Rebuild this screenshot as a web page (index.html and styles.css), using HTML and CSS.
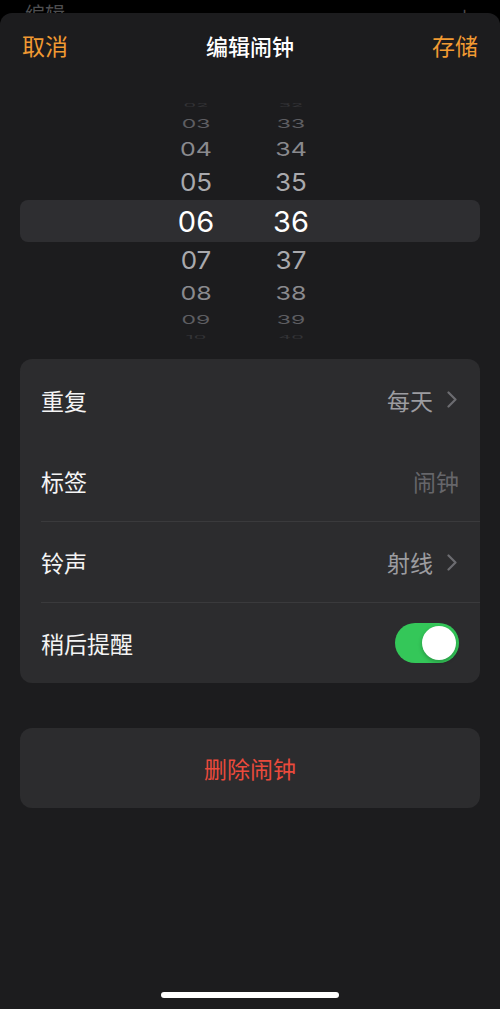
FILE: index.html
```html
<!DOCTYPE html>
<html lang="zh-CN">
  <head>
    <meta charset="utf-8">
    <title>编辑闹钟</title>
    <link rel="stylesheet" href="styles.css">
  </head>
  <body>

  <div class="backdrop">
    <span class="backdrop-edit">编辑</span>
    <span class="backdrop-plus">+</span>
  </div>

  <div class="sheet">

    <div class="nav">
      <span class="nav-btn">取消</span>
      <span class="nav-title">编辑闹钟</span>
      <span class="nav-btn">存储</span>
    </div>

    <div class="picker">
      <div class="wheel-row r-edge"><span>02</span><span>32</span></div>
      <div class="wheel-row r3"><span>03</span><span>33</span></div>
      <div class="wheel-row r2"><span>04</span><span>34</span></div>
      <div class="wheel-row r1"><span>05</span><span>35</span></div>
      <div class="wheel-row selected"><span>06</span><span>36</span></div>
      <div class="wheel-row r1"><span>07</span><span>37</span></div>
      <div class="wheel-row r2"><span>08</span><span>38</span></div>
      <div class="wheel-row r3 lower"><span>09</span><span>39</span></div>
      <div class="wheel-row r-edge"><span>10</span><span>40</span></div>
    </div>

    <div class="group">
      <div class="cell">
        <span class="cell-label">重复</span>
        <span class="cell-value">每天
          <svg class="chevron" width="10" height="17" viewBox="0 0 10 17"><path d="M1.5 1.5 L8.5 8.5 L1.5 15.5" fill="none" stroke="#6c6c70" stroke-width="2.2" stroke-linecap="round" stroke-linejoin="round"/></svg>
        </span>
      </div>
      <div class="cell">
        <span class="cell-label">标签</span>
        <span class="cell-value placeholder">闹钟</span>
      </div>
      <div class="cell divided">
        <span class="cell-label">铃声</span>
        <span class="cell-value">射线
          <svg class="chevron" width="10" height="17" viewBox="0 0 10 17"><path d="M1.5 1.5 L8.5 8.5 L1.5 15.5" fill="none" stroke="#6c6c70" stroke-width="2.2" stroke-linecap="round" stroke-linejoin="round"/></svg>
        </span>
      </div>
      <div class="cell divided">
        <span class="cell-label">稍后提醒</span>
        <span class="switch on"><span class="knob"></span></span>
      </div>
    </div>

    <div class="group delete">
      删除闹钟
    </div>

    <div class="home-bar"></div>
  </div>

  </body>
</html>
```

FILE: styles.css
```css
html {
  height: 100%;
}
body {
  margin: 0;
  padding: 0;
  background: #000000;
  color: #f2f2f2;
  font-family: "Noto Sans CJK SC", "Noto Sans", sans-serif;
  width: 500px;
}

.backdrop {
  height: 13px;
  overflow: hidden;
  display: flex;
  justify-content: space-between;
  padding: 4px 30px 0 25px;
  box-sizing: border-box;
  color: #4e4e50;
  font-size: 20px;
  line-height: 20px;
}

.sheet {
  background: #1c1c1e;
  border-radius: 12px 12px 0 0;
  min-height: 996px;
  display: flex;
  flex-direction: column;
}

.nav {
  height: 64px;
  display: flex;
  align-items: center;
  justify-content: space-between;
  padding: 0 22px;
}
.nav-btn {
  color: #f19a32;
  font-size: 23px;
}
.nav-title {
  color: #ffffff;
  font-size: 22px;
  font-weight: 500;
}

.picker {
  margin-top: 23px;
  font-family: "Inter", "Noto Sans", sans-serif;
}

.wheel-row {
  display: grid;
  grid-template-columns: 60px 60px;
  column-gap: 35px;
  padding-left: 166px;
  align-items: center;
  text-align: center;
  color: #a2a2a6;
}
.wheel-row span {
  display: block;
}

.wheel-row.selected {
  height: 42px;
  margin: 0 20px;
  padding-left: 146px;
  background: #2e2e31;
  border-radius: 8px;
  color: #ffffff;
  font-size: 29px;
}
.wheel-row.r1 {
  height: 36px;
  font-size: 26px;
  color: #a9a9ad;
}
.wheel-row.r1 span {
  transform: scaleY(0.94);
}
.wheel-row.r2 {
  height: 30px;
  font-size: 25px;
  color: #8a8a8e;
}
.wheel-row.r2 span {
  transform: scaleY(0.76);
}
.wheel-row.r3 {
  height: 24px;
  font-size: 23px;
  color: #5e5e62;
}
.wheel-row.r3 span {
  transform: scaleY(0.52);
}
.wheel-row.r3.lower span {
  transform: translateY(-2px) scaleY(0.52);
}
.wheel-row.r-edge {
  height: 10px;
  font-size: 20px;
  color: #333336;
  overflow: hidden;
}
.wheel-row.r-edge span {
  transform: scaleY(0.25);
  line-height: 10px;
}

.group {
  margin: 17px 20px 0;
  background: #2c2c2e;
  border-radius: 12px;
}

.cell {
  height: 81px;
  margin-left: 21px;
  padding-right: 21px;
  display: flex;
  align-items: center;
  justify-content: space-between;
  font-size: 23px;
}
.cell.divided {
  border-top: 1px solid #3a3a3c;
  height: 80px;
}
.cell-label {
  color: #f4f4f4;
}
.cell-value {
  color: #9c9ca0;
  display: flex;
  align-items: center;
  gap: 14px;
}
.cell-value.placeholder {
  color: #66666a;
}
.chevron {
  margin-right: 2px;
}

.switch {
  width: 64px;
  height: 40px;
  border-radius: 20px;
  background: #34c759;
  display: flex;
  align-items: center;
  justify-content: flex-end;
  padding: 0 3px;
  box-sizing: border-box;
}
.knob {
  width: 34px;
  height: 34px;
  border-radius: 50%;
  background: #ffffff;
  box-shadow: 0 2px 4px rgba(0,0,0,0.25);
}

.delete {
  margin-top: 45px;
  height: 80px;
  display: flex;
  align-items: center;
  justify-content: center;
  color: #ea4a3c;
  font-size: 23px;
}

.home-bar {
  margin: auto auto 11px;
  width: 178px;
  height: 6px;
  border-radius: 3px;
  background: #ffffff;
}
```
